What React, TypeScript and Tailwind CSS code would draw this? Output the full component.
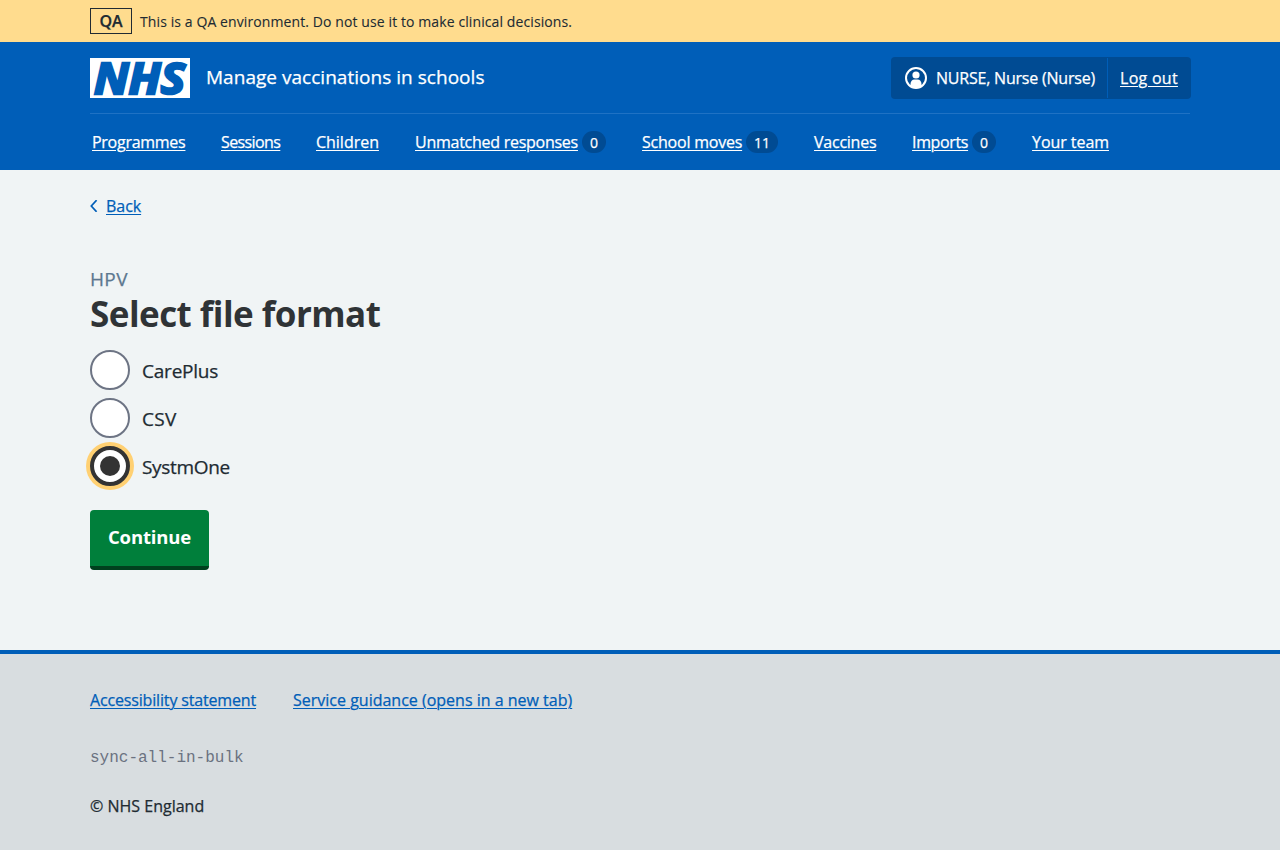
type NavItem = { label: string; count?: number; width: string; tracking: string };

const navItems: NavItem[] = [
  { label: "Programmes", width: "w-[94px]", tracking: "tracking-[-0.27px]" },
  { label: "Sessions", width: "w-[60px]", tracking: "tracking-[-0.6px]" },
  { label: "Children", width: "w-[63px]", tracking: "tracking-[-0.02px]" },
  { label: "Unmatched responses", count: 0, width: "w-[163px]", tracking: "tracking-[-0.26px]" },
  { label: "School moves", count: 11, width: "w-[100px]", tracking: "tracking-[-0.22px]" },
  { label: "Vaccines", width: "w-[62px]", tracking: "tracking-[-0.25px]" },
  { label: "Imports", count: 0, width: "w-[56px]", tracking: "tracking-[-0.36px]" },
  { label: "Your team", width: "w-[77px]", tracking: "tracking-[-0.06px]" },
];

const formats = [
  { label: "CarePlus", tracking: "tracking-[-0.22px]", checked: false },
  { label: "CSV", tracking: "tracking-[0.3px]", checked: false },
  { label: "SystmOne", tracking: "tracking-[-0.32px]", checked: true },
];

function NhsLogo() {
  return (
    <svg className="block h-10 w-[100px] overflow-visible" viewBox="0 0 100 40" role="img" aria-label="NHS">
      <rect width="100" height="40" fill="#fff" />
      <text
        x="4"
        y="35.7"
        fill="#005eb8"
        stroke="#005eb8"
        strokeWidth="2.6"
        fontFamily="'Open Sans', sans-serif"
        fontWeight="700"
        fontStyle="italic"
        fontSize="43.5"
        textLength="91"
        lengthAdjust="spacingAndGlyphs"
      >
        NHS
      </text>
    </svg>
  );
}

function UserIcon() {
  return (
    <svg className="block size-6 shrink-0" viewBox="0 0 24 24" fill="none">
      <circle cx="12" cy="12" r="10" stroke="#fff" strokeWidth="2" />
      <circle cx="12" cy="9" r="3.6" fill="#fff" />
      <path d="M6.500 20v-2c0-2.800 1.700-4.600 4-4.600h3c2.300 0 4 1.800 4 4.600v2A10 10 0 0 1 12 22a10 10 0 0 1-5.500-2z" fill="#fff" />
    </svg>
  );
}

function Header() {
  return (
    <header className="h-32 bg-[#005eb8] text-white">
      <div className="mx-auto w-[1100px]">
        <div className="flex h-[72px] items-center border-b border-[#1f72c4]">
          <NhsLogo />
          <span className="ml-4 pb-[2px] text-[19px] tracking-[0.03px] whitespace-nowrap">Manage vaccinations in schools</span>
          <div className="-mr-px ml-auto flex h-[42px] w-[300px] items-center rounded bg-[#004b93]">
            <div className="flex h-10 w-[217px] items-center gap-2 border-r border-[#005eb8] pl-[13px]">
              <UserIcon />
              <span className="tracking-[-0.21px] whitespace-nowrap">NURSE, Nurse (Nurse)</span>
            </div>
            <a className="ml-3 tracking-[0.28px] whitespace-nowrap underline decoration-1 underline-offset-2">Log out</a>
          </div>
        </div>
        <nav className="flex h-14 items-center gap-9 pl-[2px]">
          {navItems.map((item, i) => (
            <div key={item.label} className={i > 0 && i < 3 ? "-ml-px flex items-center" : "flex items-center"}>
              <a className={`${item.width} ${item.tracking} whitespace-nowrap underline decoration-1 underline-offset-2`}>{item.label}</a>
              {item.count !== undefined && (
                <span className="ml-1 flex h-[22px] items-center rounded-full bg-[#004b93] px-2 pt-px text-[14px] leading-none">
                  {item.count}
                </span>
              )}
            </div>
          ))}
        </nav>
      </div>
    </header>
  );
}

export default function App() {
  return (
    <div className="flex h-[850px] flex-col overflow-hidden bg-[#f0f4f5] font-['Open_Sans','Noto_Sans',sans-serif] text-[16px] leading-6 text-[#212b32] [-webkit-text-stroke:0.25px]">
      <div className="h-[42px] bg-[#ffdc8e]">
        <div className="mx-auto flex h-full w-[1100px] items-center gap-2">
          <strong className="flex h-[26px] w-[42px] items-center justify-center border border-[#212b32] font-semibold">QA</strong>
          <span className="pt-px text-[14px] tracking-[0.1px] whitespace-nowrap [-webkit-text-stroke:0.1px]">
            This is a QA environment. Do not use it to make clinical decisions.
          </span>
        </div>
      </div>
      <Header />
      <main className="mx-auto h-[480px] w-[1100px] pt-6">
        <a className="flex h-6 items-center text-[#005eb8]">
          <svg className="mr-2 mb-px block h-3 w-2" viewBox="0 0 8 12" fill="none" stroke="#005eb8" strokeWidth="1.7">
            <path d="M6.600 .2 1.300 6 6.600 11.800" />
          </svg>
          <span className="tracking-[-0.05px] underline decoration-1 underline-offset-2">Back</span>
        </a>
        <h1 className="pt-[47px]">
          <span className="block text-[19px] leading-7 tracking-[0.35px] text-[#5d7890]">HPV</span>
          <span className="block pt-px text-[35px] leading-10 font-bold tracking-[-0.54px] text-[#2f3336] [-webkit-text-stroke:0]">Select file format</span>
        </h1>
        <div className="mt-4 flex flex-col gap-2">
          {formats.map((f) => (
            <label key={f.label} className="flex h-10 items-center gap-3">
              {f.checked ? (
                <span className="flex size-10 items-center justify-center rounded-full border-4 border-[#333] bg-white ring-4 ring-[#ffd072]">
                  <span className="size-5 rounded-full bg-[#333]" />
                </span>
              ) : (
                <span className="size-10 rounded-full border-2 border-[#6d7484] bg-white" />
              )}
              <span className={`${f.tracking} pt-[2px] text-[19px]`}>{f.label}</span>
            </label>
          ))}
        </div>
        <button className="mt-6 block h-[60px] w-[119px] rounded border-b-4 border-[#00401e] bg-[#007f3b] pb-[3px] text-[18.5px] font-bold tracking-[-0.15px] text-white [-webkit-text-stroke:0]">
          Continue
        </button>
      </main>
      <footer className="h-[200px] border-t-4 border-[#005eb8] bg-[#d8dde0]">
        <div className="mx-auto w-[1100px] pt-[34px]">
          <div className="flex text-[#005eb8]">
            <a className="w-[203px] whitespace-nowrap"><span className="tracking-[-0.16px] underline decoration-1 underline-offset-2">Accessibility statement</span></a>
            <a className="whitespace-nowrap underline decoration-1 underline-offset-2">Service guidance (opens in a new tab)</a>
          </div>
          <p className="mt-[34px] font-['Liberation_Mono',monospace] text-[#6b7280] [-webkit-text-stroke:0]">sync-all-in-bulk</p>
          <p className="mt-6">© NHS England</p>
        </div>
      </footer>
    </div>
  );
}
